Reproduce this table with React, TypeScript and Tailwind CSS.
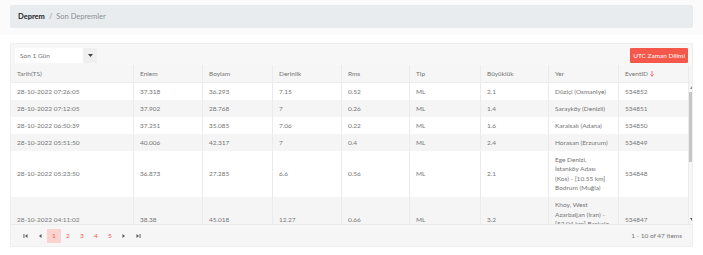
import React from "react";

interface Quake {
  date: string;
  lat: string;
  lng: string;
  depth: string;
  rms: string;
  type: string;
  mag: string;
  place: string;
  id: string;
}

const quakes: Quake[] = [
  { date: "28-10-2022 07:26:05", lat: "37.318", lng: "36.293", depth: "7.15", rms: "0.52", type: "ML", mag: "2.1", place: "Düziçi (Osmaniye)", id: "534852" },
  { date: "28-10-2022 07:12:05", lat: "37.902", lng: "28.768", depth: "7", rms: "0.26", type: "ML", mag: "1.4", place: "Sarayköy (Denizli)", id: "534851" },
  { date: "28-10-2022 06:50:39", lat: "37.251", lng: "35.085", depth: "7.06", rms: "0.22", type: "ML", mag: "1.6", place: "Karaisalı (Adana)", id: "534850" },
  { date: "28-10-2022 05:51:50", lat: "40.006", lng: "42.317", depth: "7", rms: "0.4", type: "ML", mag: "2.4", place: "Horasan (Erzurum)", id: "534849" },
  { date: "28-10-2022 05:23:50", lat: "36.873", lng: "27.285", depth: "6.6", rms: "0.56", type: "ML", mag: "2.1", place: "Ege Denizi,\nİstanköy Adası\n(Kos) - [10.55 km]\nBodrum (Muğla)", id: "534848" },
  { date: "28-10-2022 04:11:02", lat: "38.38", lng: "45.018", depth: "12.27", rms: "0.66", type: "ML", mag: "3.2", place: "Khoy, West\nAzarbaijan (Iran) -\n[52.04 km] Başkale\n(Van)", id: "534847" },
];

const cols = "grid grid-cols-[123px_69px_70px_69px_68px_71px_68px_70px_70px]";
const cell = "flex items-center border-r border-[#ebebeb] pl-[6px] pr-[3px] whitespace-pre-line leading-[9.5px]";

const PagerIcon = ({ dir, bar }: { dir: "l" | "r"; bar?: boolean }) => (
  <svg width="6" height="6" viewBox="0 0 6 6" className="text-[#555]">
    {dir === "l" ? (
      <>
        {bar && <rect x="0.5" y="1" width="0.9" height="4" fill="currentColor" />}
        <path d="M4.5 1 L2 3 L4.5 5 Z" fill="currentColor" />
      </>
    ) : (
      <>
        <path d="M1.5 1 L4 3 L1.5 5 Z" fill="currentColor" />
        {bar && <rect x="4.6" y="1" width="0.9" height="4" fill="currentColor" />}
      </>
    )}
  </svg>
);

const App = () => {
  return (
    <div className="min-h-screen bg-white font-['Lato','Liberation_Sans',sans-serif] text-[6.5px] text-[#757575]">
      <div className="bg-[#fbfbfb] px-[10px] pb-[7px] pt-[5px]">
        <div className="flex h-[23px] items-center gap-[4px] rounded-[2px] bg-[#e9ecef] px-[8px] text-[7.5px]">
          <span className="font-bold text-[#212529]">Deprem</span>
          <span className="text-[#8a9097]">/</span>
          <span className="text-[#8a9097]">Son Depremler</span>
        </div>
      </div>

      <div className="mx-[10px] mt-[8px] border border-[#efefef] bg-[#f7f7f7]">
        <div className="flex h-[21px] items-start justify-between px-[4px] pt-[4px]">
          <div className="flex h-[15px] w-[82px]">
            <div className="flex w-[68px] items-center bg-white pl-[5px]">Son 1 Gün</div>
            <div className="flex flex-1 items-center justify-center bg-[#f0f0f0]">
              <svg width="5" height="3" viewBox="0 0 5 3">
                <path d="M0 0 L5 0 L2.5 3 Z" fill="#444" />
              </svg>
            </div>
          </div>
          <button className="flex h-[15px] items-center rounded-[1px] bg-[#f3584b] px-[3px] text-[6.5px] text-white">
            UTC Zaman Dilimi
          </button>
        </div>

        <div className="flex h-[18px] border-b border-[#ebebeb] bg-[#f6f6f6]">
          <div className={cols}>
            {["Tarih(TS)", "Enlem", "Boylam", "Derinlik", "Rms", "Tip", "Büyüklük", "Yer"].map((h) => (
              <div key={h} className={cell}>{h}</div>
            ))}
            <div className={`${cell} gap-[2px]`}>
              EventID
              <svg width="4" height="6" viewBox="0 0 4 6">
                <path d="M2 0 L2 5 M0.5 3.5 L2 5.3 L3.5 3.5" stroke="#f3584b" strokeWidth="0.8" fill="none" />
              </svg>
            </div>
          </div>
        </div>

        <div className="flex h-[141px] overflow-hidden">
          <div className="flex flex-col">
            {quakes.map((q, i) => (
              <div key={q.id} className={`${cols} ${i % 2 ? "bg-[#f5f5f5]" : "bg-white"}`}>
                {[q.date, q.lat, q.lng, q.depth, q.rms, q.type, q.mag, q.place, q.id].map((v, j) => (
                  <div key={j} className={`${cell} py-[3.75px]`}>{v}</div>
                ))}
              </div>
            ))}
          </div>
          <div className="flex w-[6px] flex-col items-center bg-[#f7f7f7]">
            <svg width="4" height="3" viewBox="0 0 4 3" className="mt-[3px]">
              <path d="M0 3 L4 3 L2 0 Z" fill="#8a8a8a" />
            </svg>
            <div className="mt-[3px] h-[70px] w-[5px] bg-[#c6c6c6]" />
            <div className="flex-1" />
            <svg width="4" height="3" viewBox="0 0 4 3" className="mb-[3px]">
              <path d="M0 0 L4 0 L2 3 Z" fill="#555" />
            </svg>
          </div>
        </div>

        <div className="flex h-[22px] items-center justify-between border-t border-[#ebebeb] bg-[#f6f6f6] pl-[8px] pr-[10px]">
          <div className="flex items-center">
            <span className="flex w-[14px] justify-center"><PagerIcon dir="l" bar /></span>
            <span className="flex w-[14px] justify-center"><PagerIcon dir="l" /></span>
            <span className="flex h-[14px] w-[14px] items-center justify-center bg-[#f9d3cf] text-[#f3584b]">1</span>
            {["2", "3", "4", "5"].map((p) => (
              <span key={p} className="flex w-[14px] justify-center text-[#f3584b]">{p}</span>
            ))}
            <span className="flex w-[14px] justify-center"><PagerIcon dir="r" /></span>
            <span className="flex w-[14px] justify-center"><PagerIcon dir="r" bar /></span>
          </div>
          <span>1 - 10 of 47 items</span>
        </div>
      </div>
    </div>
  );
};

export default App;
